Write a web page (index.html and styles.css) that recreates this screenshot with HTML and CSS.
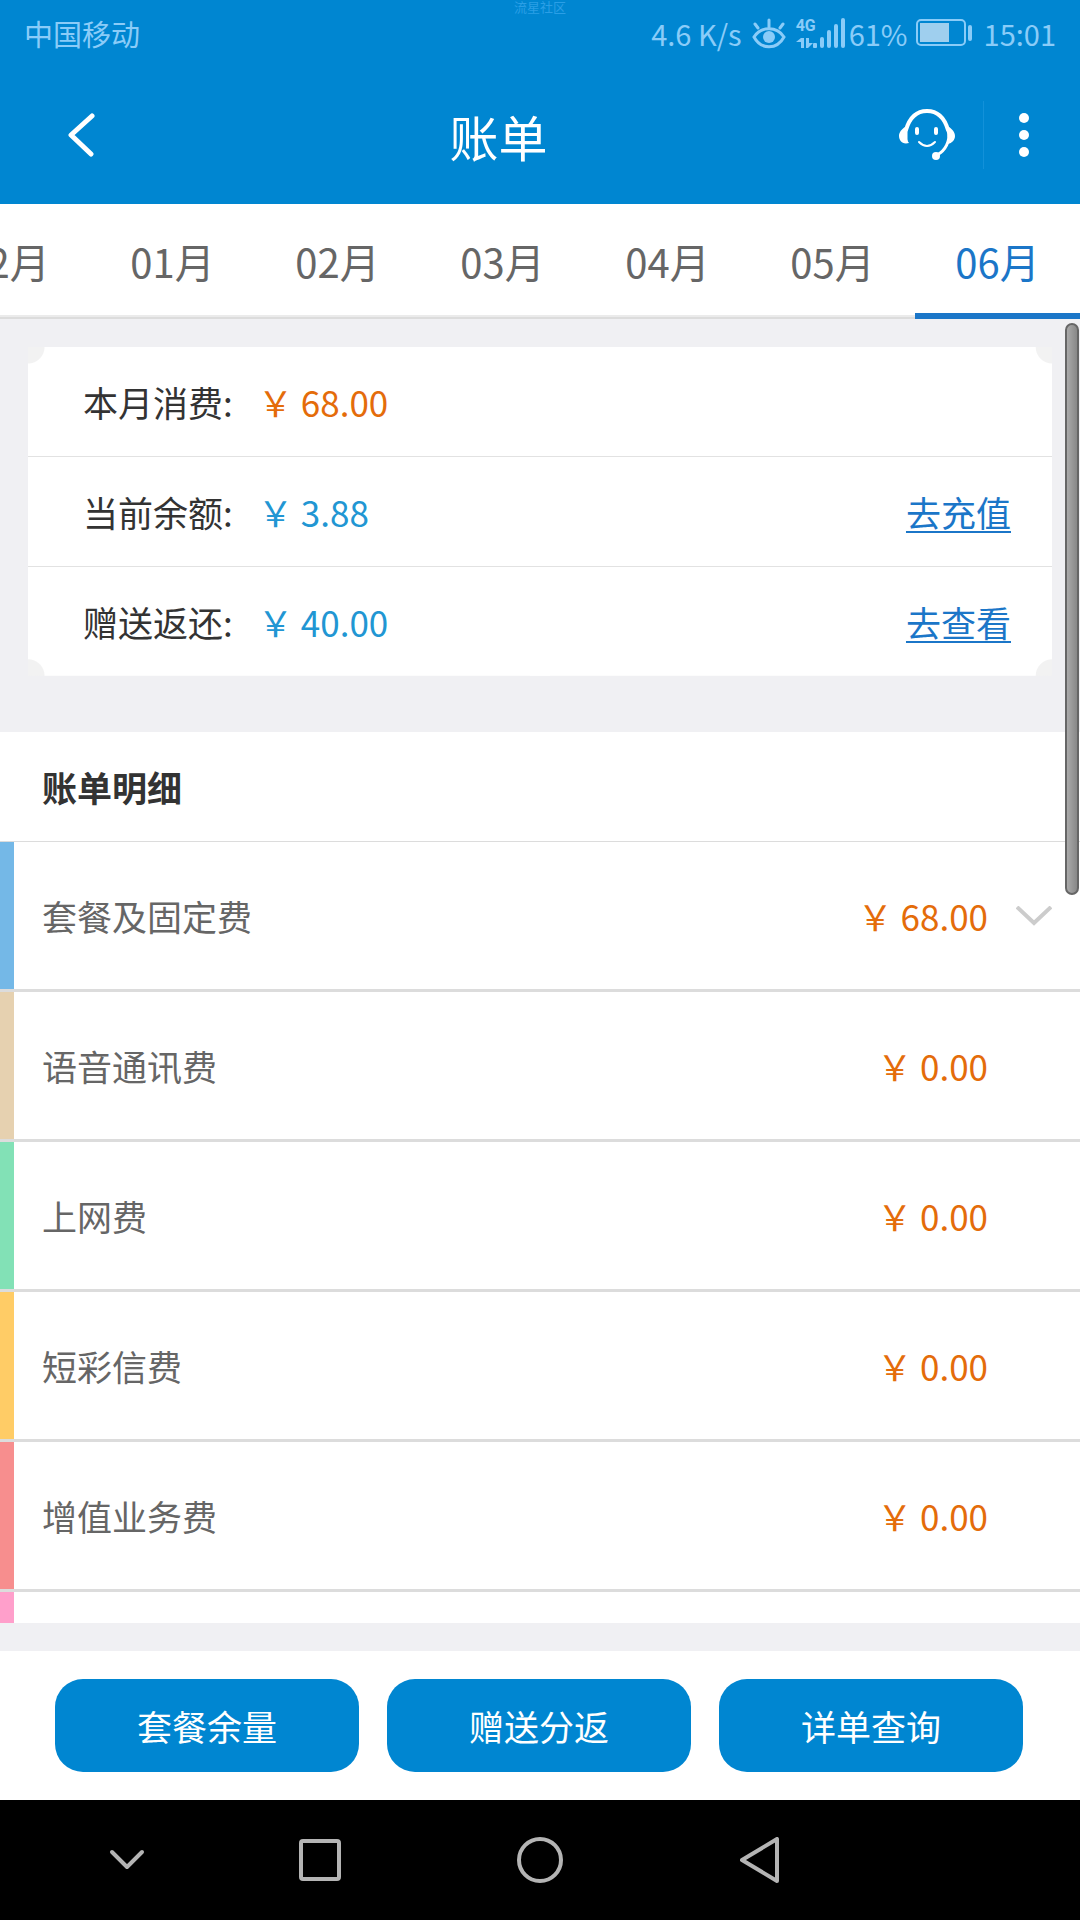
FILE: index.html
```html
<!DOCTYPE html>
<html lang="zh-CN">
    <head>
        <meta charset="utf-8">
        <title>账单</title>
        <meta name="viewport" content="width=device-width,initial-scale=1">
        <link rel="stylesheet" href="styles.css">
    </head>
    <body>
        <header class="header">
            <div class="status-bar">
                <span class="carrier">中国移动</span>
                <div class="status-right">
                    <span class="speed">4.6 K/s</span>
                    <svg class="icon-eye" width="34" height="32" viewBox="0 0 34 32" fill="none" stroke="currentColor" stroke-linecap="round" stroke-width="3">
                        <path d="M2 20C9 9 25 9 32 20C25 33 9 33 2 20Z"/>
                        <circle cx="17" cy="20" r="6" fill="currentColor" stroke="none"/>
                        <path d="M17 3v7M3 7l3 4M31 7l-3 4"/>
                    </svg>
                    <div class="signal">
                        <div class="network">
                            <span class="network-type">4G</span>
                            <svg width="17" height="10" viewBox="0 0 17 10" fill="currentColor">
                                <path d="M0 4L5 0H8V10H5V4ZM10 0h3v5h4l-5 5h-2z"/>
                            </svg>
                        </div>
                        <svg width="32" height="32" viewBox="0 0 32 32" fill="currentColor">
                            <rect x="0" y="26" width="4" height="5" rx="1"/>
                            <rect x="7" y="20" width="4" height="11" rx="2"/>
                            <rect x="14" y="13" width="4" height="18" rx="2"/>
                            <rect x="21" y="7" width="4" height="24" rx="2"/>
                            <rect x="28" y="1" width="4" height="30" rx="2"/>
                        </svg>
                    </div>
                    <span class="percent">61%</span>
                    <svg class="icon-battery" width="56" height="28" viewBox="0 0 56 28">
                        <rect x="1" y="1" width="48" height="25" rx="4" fill="none" stroke="currentColor" stroke-width="2"/>
                        <rect x="4" y="4" width="29" height="19" fill="#9fcfee"/>
                        <rect x="52" y="6" width="4" height="16" rx="2" fill="currentColor"/>
                    </svg>
                    <span class="time">15:01</span>
                </div>
                <span class="watermark">流星社区</span>
            </div>
            <div class="nav-bar">
                <button class="nav-btn back-btn" aria-label="返回">
                    <svg width="28" height="44" viewBox="0 0 28 44" fill="none" stroke="currentColor" stroke-width="5" stroke-linecap="round" stroke-linejoin="round">
                        <path d="M24 3L3 22L23 41"/>
                    </svg>
                </button>
                <h1 class="nav-title">账单</h1>
                <button class="nav-btn service-btn" aria-label="客服">
                    <svg width="56" height="52" viewBox="0 0 56 52" fill="none" stroke="currentColor" stroke-linecap="round">
                        <path d="M7 21C11 7 19 2 28 2S45 7 49 21" stroke-width="4"/>
                        <path d="M6 18C7 24 7 30 10 34C3 36 0 31 0 27C0 23 3 20 6 18ZM50 18C53 20 56 23 56 27C56 31 53 34 49 35C50 30 50 24 50 18Z" fill="currentColor" stroke="none"/>
                        <path d="M7 21V32M49 21C52 32 46 42 38 46" stroke-width="3"/>
                        <circle cx="37" cy="47" r="4" fill="currentColor" stroke="none"/>
                        <path d="M18 20v4M37 20v4" stroke-width="4"/>
                        <path d="M20 33Q28 41 36 33" stroke-width="2"/>
                    </svg>
                </button>
                <button class="nav-btn more-btn" aria-label="更多">
                    <svg width="10" height="44" viewBox="0 0 10 44" fill="currentColor">
                        <circle cx="5" cy="5" r="5"/>
                        <circle cx="5" cy="22" r="5"/>
                        <circle cx="5" cy="39" r="5"/>
                    </svg>
                </button>
            </div>
        </header>

        <nav class="month-tabs">
            <a class="month" href="#12">12月</a>
            <a class="month" href="#01">01月</a>
            <a class="month" href="#02">02月</a>
            <a class="month" href="#03">03月</a>
            <a class="month" href="#04">04月</a>
            <a class="month" href="#05">05月</a>
            <a class="month active" href="#06">06月</a>
        </nav>

        <main class="content">
            <div class="scrollbar"></div>
            <section class="summary">
                <div class="summary-row">
                    <span class="summary-label">本月消费:</span>
                    <span class="amount">￥ 68.00</span>
                </div>
                <div class="summary-row">
                    <span class="summary-label">当前余额:</span>
                    <span class="amount blue">￥ 3.88</span>
                    <a class="summary-link" href="#recharge">去充值</a>
                </div>
                <div class="summary-row">
                    <span class="summary-label">赠送返还:</span>
                    <span class="amount blue">￥ 40.00</span>
                    <a class="summary-link" href="#gift">去查看</a>
                </div>
            </section>

            <section class="detail">
                <h2 class="detail-title">账单明细</h2>
                <ul class="detail-list">
                    <li class="detail-item c-blue">
                        <span class="detail-name">套餐及固定费</span>
                        <span class="amount">￥ 68.00</span>
                        <svg class="arrow" width="36" height="20" viewBox="0 0 36 20" fill="none" stroke="#ccc" stroke-width="4">
                            <path d="M1 1L18 17L35 1"/>
                        </svg>
                    </li>
                    <li class="detail-item c-tan">
                        <span class="detail-name">语音通讯费</span>
                        <span class="amount">￥ 0.00</span>
                    </li>
                    <li class="detail-item c-green">
                        <span class="detail-name">上网费</span>
                        <span class="amount">￥ 0.00</span>
                    </li>
                    <li class="detail-item c-yellow">
                        <span class="detail-name">短彩信费</span>
                        <span class="amount">￥ 0.00</span>
                    </li>
                    <li class="detail-item c-red">
                        <span class="detail-name">增值业务费</span>
                        <span class="amount">￥ 0.00</span>
                    </li>
                    <li class="detail-item c-pink"></li>
                </ul>
            </section>
        </main>

        <footer class="actions">
            <button class="action-btn">套餐余量</button>
            <button class="action-btn">赠送分返</button>
            <button class="action-btn">详单查询</button>
        </footer>

        <div class="system-nav">
            <button class="sys-btn sys-hide" aria-label="收起">
                <svg width="36" height="22" viewBox="0 0 36 22"><path d="M3 3L18 18L33 3"/></svg>
            </button>
            <button class="sys-btn" aria-label="最近任务">
                <svg width="42" height="42" viewBox="0 0 42 42"><rect x="2" y="2" width="38" height="38" rx="2"/></svg>
            </button>
            <button class="sys-btn" aria-label="主页">
                <svg width="46" height="46" viewBox="0 0 46 46"><circle cx="23" cy="23" r="21"/></svg>
            </button>
            <button class="sys-btn" aria-label="返回">
                <svg width="40" height="46" viewBox="0 0 40 46"><path d="M37 2V44L2 23Z"/></svg>
            </button>
        </div>
    </body>
</html>
```
FILE: styles.css
```css
* {
    box-sizing: border-box;
}
html, body {
    margin: 0;
    padding: 0;
    height: 100%;
}
body {
    display: flex;
    flex-direction: column;
    overflow: hidden;
    font-family: "Noto Sans CJK SC", "Microsoft Yahei", sans-serif;
    font-size: 35px;
    background: #f0f0f3;
    color: #333;
}
h1, h2, ul, li {
    margin: 0;
    padding: 0;
    list-style: none;
}
a {
    color: inherit;
    text-decoration: none;
}
button {
    border: none;
    padding: 0;
    background: none;
    font-family: inherit;
    color: inherit;
    cursor: pointer;
}
svg {
    display: block;
    flex: none;
}

/* 顶部 */
.header {
    flex: none;
    background: #0086d1;
    color: #fff;
}
.status-bar {
    position: relative;
    display: flex;
    align-items: center;
    justify-content: space-between;
    height: 66px;
    padding: 0 24px;
    font-size: 29px;
    color: #8accf8;
}
.status-right {
    display: flex;
    align-items: center;
}
.icon-eye {
    margin: 0 10px;
}
.signal {
    display: flex;
}
.network {
    display: flex;
    flex-direction: column;
    justify-content: space-between;
    padding-bottom: 1px;
    height: 32px;
}
.network-type {
    width: 17px;
    font-family: Roboto, sans-serif;
    font-size: 16px;
    font-weight: bold;
    line-height: 18px;
}
.icon-battery {
    margin: 0 12px 0 8px;
}
.percent {
    margin-left: 4px;
}
.watermark {
    position: absolute;
    top: 0;
    left: 0;
    right: 0;
    text-align: center;
    font-size: 13px;
    line-height: 13px;
    color: #2b9fe6;
}
.nav-bar {
    display: flex;
    align-items: center;
    height: 138px;
}
.nav-btn {
    display: flex;
    align-items: center;
    justify-content: center;
    height: 68px;
}
.back-btn {
    width: 164px;
}
.nav-title {
    flex: 1;
    padding-right: 38px;
    font-size: 49px;
    font-weight: normal;
    text-align: center;
}
.service-btn {
    width: 112px;
}
.more-btn {
    width: 97px;
    padding-right: 16px;
    border-left: 1px solid #1391d9;
}

/* 月份 */
.month-tabs {
    flex: none;
    display: flex;
    justify-content: flex-end;
    height: 115px;
    overflow: hidden;
    background: #fff;
    box-shadow: inset 0 -2px #dcdcdc, inset 0 -4px #ebebeb;
}
.month {
    flex: none;
    width: 165px;
    font-size: 40px;
    line-height: 115px;
    text-align: center;
    color: #666;
}
.month.active {
    color: #1b76c8;
    border-bottom: 6px solid #1b76c8;
}

/* 内容 */
.content {
    position: relative;
    flex: 1;
    min-height: 0;
    overflow: hidden;
}
.scrollbar {
    position: absolute;
    top: 4px;
    right: 1px;
    width: 14px;
    height: 572px;
    border: 2px solid #666;
    border-radius: 7px;
    background: linear-gradient(to right, #aaa, #888);
}
/* 四角内凹的卡片 */
.summary {
    margin: 28px 28px 56px;
    background:
        radial-gradient(circle at 0 0, #f2f2f2 16px, #fff 17px) 0 0 / 51% 51% no-repeat,
        radial-gradient(circle at 100% 0, #f2f2f2 16px, #fff 17px) 100% 0 / 51% 51% no-repeat,
        radial-gradient(circle at 0 100%, #f2f2f2 16px, #fff 17px) 0 100% / 51% 51% no-repeat,
        radial-gradient(circle at 100% 100%, #f2f2f2 16px, #fff 17px) 100% 100% / 51% 51% no-repeat;
}
.summary-row {
    display: flex;
    align-items: center;
    height: 110px;
    padding: 0 41px 0 55px;
    border-bottom: 1px solid #e2e2e2;
}
.summary-row:last-child {
    height: 109px;
    border-bottom: none;
}
.summary-label {
    width: 175px;
}
.summary-link {
    margin-left: auto;
    color: #1b76c8;
    text-decoration: underline;
    text-decoration-thickness: 2px;
    text-underline-offset: 4px;
}
.amount {
    color: #e46c0a;
}
.amount.blue {
    color: #2196d3;
}

/* 账单明细 */
.detail {
    background: #fff;
}
.detail-title {
    height: 110px;
    padding-left: 42px;
    border-bottom: 1px solid #dcdcdc;
    font-size: 35px;
    line-height: 109px;
}
.detail-item {
    display: flex;
    align-items: center;
    height: 150px;
    padding: 0 28px 0 42px;
    border-bottom: 3px solid #dcdcdc;
}
.detail-name {
    color: #666;
}
.detail-item .amount {
    margin-left: auto;
    margin-right: 64px;
}
.detail-item .arrow {
    margin-left: -36px;
}
.c-blue { box-shadow: inset 14px 0 #74b8e7; }
.c-tan { box-shadow: inset 14px 0 #e6d1b0; }
.c-green { box-shadow: inset 14px 0 #82e1b6; }
.c-yellow { box-shadow: inset 14px 0 #ffcc66; }
.c-red { box-shadow: inset 14px 0 #f78e8e; }
.c-pink { box-shadow: inset 14px 0 #ff9fcb; }

/* 底部按钮 */
.actions {
    flex: none;
    display: flex;
    gap: 28px;
    margin-top: 28px;
    padding: 28px 57px 28px 55px;
    background: #fff;
}
.action-btn {
    flex: 1;
    height: 93px;
    border-radius: 28px;
    background: #0086d1;
    font-size: 35px;
    color: #fff;
}

/* 系统导航 */
.system-nav {
    flex: none;
    display: flex;
    justify-content: center;
    height: 120px;
    padding-right: 166px;
    background: #000;
}
.sys-btn {
    display: flex;
    align-items: center;
    justify-content: center;
    width: 220px;
}
.sys-hide {
    width: 166px;
}
.sys-btn svg {
    fill: none;
    stroke: #b4b4b4;
    stroke-width: 4;
    stroke-linecap: round;
    stroke-linejoin: round;
}
```
